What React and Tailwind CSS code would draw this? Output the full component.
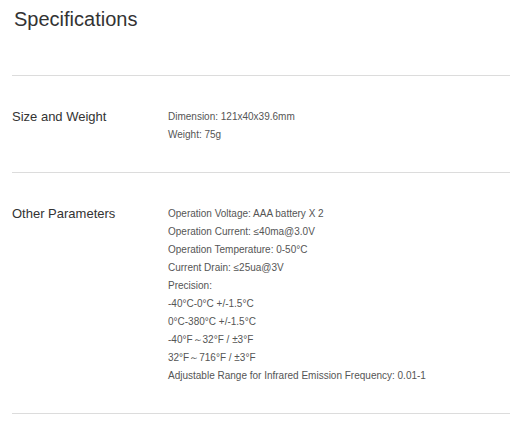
const sections = [
  {
    label: 'Size and Weight',
    values: ['Dimension: 121x40x39.6mm', 'Weight: 75g']
  },
  {
    label: 'Other Parameters',
    values: [
      'Operation Voltage: AAA battery X 2',
      'Operation Current: ≤40ma@3.0V',
      'Operation Temperature: 0-50°C',
      'Current Drain: ≤25ua@3V',
      'Precision:',
      '-40°C-0°C +/-1.5°C',
      '0°C-380°C +/-1.5°C',
      '-40°F～32°F / ±3°F',
      '32°F～716°F / ±3°F',
      'Adjustable Range for Infrared Emission Frequency: 0.01-1'
    ]
  }
];

function App() {
  return (
    <div className="min-h-[425px] bg-white pl-[12px] pr-[16px] pt-[7px] font-['Liberation_Sans',Arial,sans-serif]">
      <h2 className="ml-[2px] text-[20px] leading-[24px] text-[#333]">Specifications</h2>

      <div className="mt-[44px] border-t border-[#dcdcdc]">
        {sections.map((section) => (
          <div key={section.label} className="flex border-b border-[#dcdcdc] pt-[32px] pb-[28px]">
            <div className="w-[156px] shrink-0 text-[13px] leading-[18px] text-[#333]">{section.label}</div>
            <div className="text-[10px] leading-[18px] text-[#555]">
              {section.values.map((value) => (
                <p key={value}>{value}</p>
              ))}
            </div>
          </div>
        ))}
      </div>
    </div>
  );
}

export default App;
